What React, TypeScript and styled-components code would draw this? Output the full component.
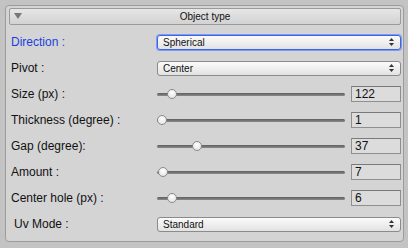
import React from 'react';
import styled, { createGlobalStyle } from 'styled-components';

const GlobalStyle = createGlobalStyle`
    html, body {
        margin: 0;
        padding: 0;
        background: #c3c3c3;
        font-family: 'Lucida Grande', 'Liberation Sans', Arial, sans-serif;
    }
`;

type Field =
    | { kind: 'select'; label: string; value: string; focused?: boolean; indent?: boolean }
    | { kind: 'slider'; label: string; value: number; pos: number };

const fields: Field[] = [
    { kind: 'select', label: 'Direction :', value: 'Spherical', focused: true },
    { kind: 'select', label: 'Pivot :', value: 'Center' },
    { kind: 'slider', label: 'Size (px) :', value: 122, pos: 0.055 },
    { kind: 'slider', label: 'Thickness (degree) :', value: 1, pos: 0 },
    { kind: 'slider', label: 'Gap (degree):', value: 37, pos: 0.188 },
    { kind: 'slider', label: 'Amount :', value: 7, pos: 0.004 },
    { kind: 'slider', label: 'Center hole (px) :', value: 6, pos: 0.055 },
    { kind: 'select', label: 'Uv Mode :', value: 'Standard', indent: true },
];

const App = () => {
    return (
        <>
            <GlobalStyle />
            <Panel>
                <Header>
                    <Triangle />
                    <HeaderTitle>Object type</HeaderTitle>
                </Header>
                <Rows>
                    {fields.map((f) => (
                        <Row key={f.label}>
                            <Label $active={f.kind === 'select' && !!f.focused} $indent={f.kind === 'select' && !!f.indent}>
                                {f.label}
                            </Label>
                            {f.kind === 'select' ? (
                                <Select $focused={!!f.focused}>
                                    <span>{f.value}</span>
                                    <Arrows>
                                        <svg width="5" height="8" viewBox="0 0 5 8">
                                            <path d="M2.5 0 L5 3 L0 3 Z" fill="#333" />
                                            <path d="M2.5 8 L5 5 L0 5 Z" fill="#333" />
                                        </svg>
                                    </Arrows>
                                </Select>
                            ) : (
                                <SliderRow>
                                    <Track>
                                        <Thumb style={{ left: `${f.pos * 100}%` }} />
                                    </Track>
                                    <NumberBox>{f.value}</NumberBox>
                                </SliderRow>
                            )}
                        </Row>
                    ))}
                </Rows>
            </Panel>
        </>
    );
};

export default App;

const Panel = styled.div`
    box-sizing: border-box;
    margin: 5px 0 0 5px;
    width: 399px;
    height: 237px;
    border: 1px solid #9c9c9c;
    border-radius: 4px;
    background: #d4d4d4;
    padding: 2px 2px 0 3px;
`;

const Header = styled.div`
    position: relative;
    box-sizing: border-box;
    height: 17px;
    border: 1px solid #9a9a9a;
    border-radius: 2px;
    background: linear-gradient(#e6e6e6, #d2d2d2);
    display: flex;
    align-items: center;
    justify-content: center;
`;

const Triangle = styled.div`
    position: absolute;
    left: 4px;
    top: 4px;
    width: 0;
    height: 0;
    border-left: 4px solid transparent;
    border-right: 4px solid transparent;
    border-top: 6px solid #777;
`;

const HeaderTitle = styled.span`
    font-size: 10px;
    color: #111;
`;

const Rows = styled.div`
    display: flex;
    flex-direction: column;
    padding-top: 4px;
`;

const Row = styled.div`
    display: grid;
    grid-template-columns: 148px 1fr;
    align-items: center;
    height: 26px;
`;

const Label = styled.span<{ $active: boolean; $indent: boolean }>`
    font-size: 12px;
    color: ${(p) => (p.$active ? '#1a3ee0' : '#111')};
    padding-left: ${(p) => (p.$indent ? '5px' : '2px')};
`;

const Select = styled.div<{ $focused: boolean }>`
    box-sizing: border-box;
    height: 15px;
    border: 1px solid ${(p) => (p.$focused ? '#3d63e6' : '#8b8b8b')};
    box-shadow: ${(p) => (p.$focused ? '0 0 0 1px #7d9cf0' : 'none')};
    border-radius: 3px;
    background: linear-gradient(#fbfbfb, #e2e2e2);
    display: flex;
    align-items: center;
    justify-content: space-between;
    padding: 0 6px 0 5px;
    font-size: 10px;
    color: #111;
`;

const Arrows = styled.span`
    display: flex;
    align-items: center;
`;

const SliderRow = styled.div`
    display: flex;
    align-items: center;
    gap: 6px;
`;

const Track = styled.div`
    position: relative;
    flex: 1;
    height: 3px;
    border-radius: 2px;
    background: linear-gradient(#5e5e5e, #8a8a8a);
`;

const Thumb = styled.div`
    position: absolute;
    top: 50%;
    width: 10px;
    height: 10px;
    margin-top: -5px;
    box-sizing: border-box;
    border: 1px solid #8a8a8a;
    border-radius: 50%;
    background: radial-gradient(circle at 50% 35%, #ffffff, #dedede);
`;

const NumberBox = styled.div`
    box-sizing: border-box;
    width: 50px;
    height: 16px;
    border: 1px solid #8f8f8f;
    border-top-color: #7a7a7a;
    background: #dcdcdc;
    font-size: 12px;
    line-height: 14px;
    padding-left: 3px;
    color: #111;
`;
